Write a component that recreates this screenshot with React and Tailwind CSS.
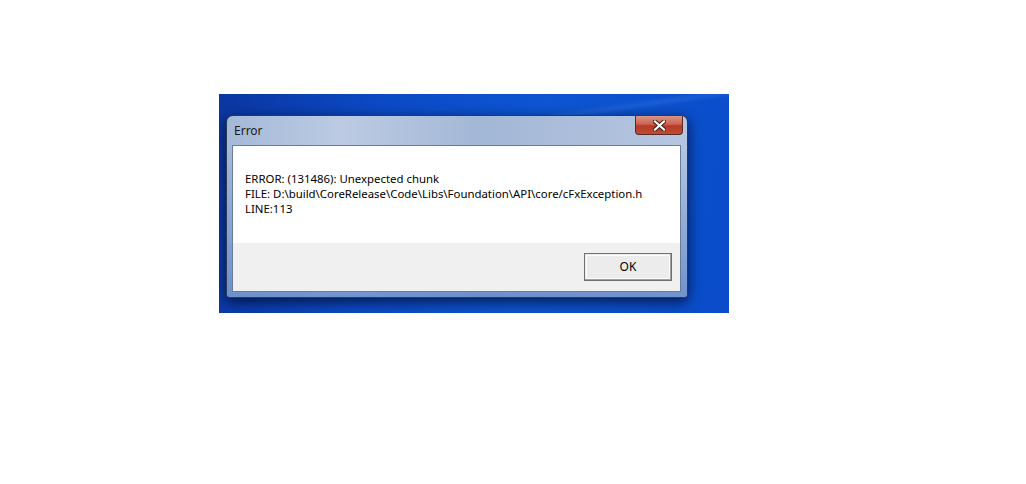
import React from "react";

export default function App() {
  const font = { fontFamily: '"Noto Sans", "Open Sans", sans-serif' };
  return (
    <div className="w-[1026px] h-[484px] bg-white overflow-hidden" style={font}>
      <div className="ml-[219px] mt-[94px] w-[510px] h-[219px] pl-[7px] pt-[21px] bg-[linear-gradient(100deg,#0a36a0_0%,#0b4ac4_30%,#0d55d2_60%,#0a4cc9_100%)] relative overflow-hidden">
        <div className="absolute right-[-20px] top-[8px] w-[200px] h-[3px] bg-[#3a78e0] opacity-60 rotate-[-8deg] blur-[2px]" />
        <div className="w-[462px] h-[183px] rounded-t-[7px] rounded-b-[4px] border border-[#2a3a55] bg-[linear-gradient(90deg,#a4b9d8_0%,#bccbe3_25%,#a3b7d6_55%,#aebfdc_80%,#b4c6e2_100%)] shadow-[0_4px_14px_rgba(0,0,20,0.7)] flex flex-col relative">
          <div className="absolute inset-x-0 bottom-0 h-[150px] bg-[linear-gradient(180deg,rgba(90,130,200,0)_0%,rgba(90,130,200,0.75)_100%)] rounded-b-[4px]" />
          <div className="relative h-[29px] flex items-start justify-between pl-[7px] pr-[4px]">
            <span className="mt-[6px] text-[12px] text-[#1a1a1a]">Error</span>
            <div className="w-[48px] h-[19px] rounded-b-[4px] border border-[#5a2a25] border-t-0 bg-[linear-gradient(180deg,#dc9486_0%,#cc6450_45%,#b43a26_55%,#c04c34_100%)] flex items-center justify-center">
              <svg width="13" height="11" viewBox="0 0 13 11">
                <path d="M2 1.5 L11 9.5 M11 1.5 L2 9.5" stroke="#3a1a16" strokeWidth="4" strokeLinecap="square" />
                <path d="M2 1.5 L11 9.5 M11 1.5 L2 9.5" stroke="#ffffff" strokeWidth="2.2" strokeLinecap="square" />
              </svg>
            </div>
          </div>
          <div className="relative ml-[5px] mr-[6px] h-[147px] border border-[#6a7c98] flex flex-col">
            <div className="h-[97px] bg-white pl-[12px] pt-[25px] text-[11.4px] leading-[15px] text-black">
              <div>ERROR: (131486): Unexpected chunk</div>
              <div>FILE: D:\build\CoreRelease\Code\Libs\Foundation\API\core/cFxException.h</div>
              <div>LINE:113</div>
            </div>
            <div className="flex-1 bg-[#f0f0f0] flex justify-end items-start pt-[10px] pr-[8px]">
              <div className="w-[88px] h-[28px] border border-[#707070] bg-[#ececec] p-[1px] shadow-[inset_-1px_-1px_0_#a0a0a0]">
                <div className="w-full h-full border border-[#fbfbfb] bg-[#ececec] flex items-center justify-center text-[12px] text-black">
                  OK
                </div>
              </div>
            </div>
          </div>
        </div>
      </div>
    </div>
  );
}
